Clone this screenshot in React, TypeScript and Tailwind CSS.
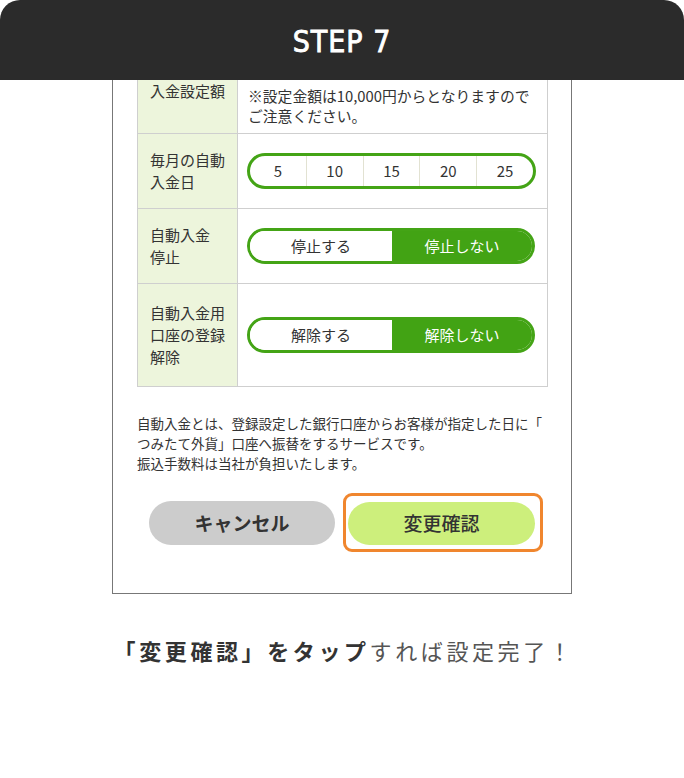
import React from "react";

const jp = { fontFamily: '"Noto Sans CJK JP", "Noto Sans", sans-serif' };

function Row({
  label,
  className,
  labelClass,
  children,
}: {
  label: React.ReactNode;
  className: string;
  labelClass?: string;
  children: React.ReactNode;
}) {
  return (
    <div className={`grid grid-cols-[100px_1fr] border-b border-[#cfcfcf] ${className}`}>
      <div
        className={`bg-[#edf5dc] border-r border-[#cfcfcf] pl-[12px] text-[15px] leading-[22px] text-[#333] flex ${
          labelClass ?? "items-center"
        }`}
      >
        <div>{label}</div>
      </div>
      {children}
    </div>
  );
}

function Toggle({ on, off }: { on: string; off: string }) {
  return (
    <div className="flex h-[36px] w-[288px] rounded-full border-[3px] border-[#44a416] overflow-hidden text-[15px]">
      <div className="flex-1 bg-white flex items-center justify-center text-[#333]">{on}</div>
      <div className="w-[140px] bg-[#42a314] flex items-center justify-center text-white">{off}</div>
    </div>
  );
}

export default function App() {
  const days = [5, 10, 15, 20, 25];
  return (
    <div className="w-[684px] h-[778px] bg-white overflow-hidden" style={jp}>
      <div className="h-[80px] bg-[#2b2b2b] rounded-t-[20px] flex items-center justify-center">
        <span
          className="text-white text-[30px] tracking-[1px] pt-[2px] [-webkit-text-stroke:0.8px_white]"
          style={{ fontFamily: '"DejaVu Sans Condensed", "DejaVu Sans", sans-serif', fontWeight: 400 }}
        >
          STEP 7
        </span>
      </div>

      <div className="ml-[112px] w-[460px] h-[514px] border-x border-b border-[#777] pl-[24px] flex flex-col">
        <div className="w-[411px] border-x border-[#cfcfcf]">
          <Row label="入金設定額" className="h-[54px]" labelClass="items-start leading-[20px]">
            <div className="pl-[10px] pt-[6px] text-[14.8px] leading-[20px] text-[#333] whitespace-nowrap">
              ※設定金額は10,000円からとなりますので
              <br />
              ご注意ください。
            </div>
          </Row>

          <Row
            label={
              <>
                毎月の自動
                <br />
                入金日
              </>
            }
            className="h-[75px]"
          >
            <div className="flex items-center pl-[9px]">
              <div className="flex h-[36px] w-[289px] rounded-full border-[3px] border-[#44a416] overflow-hidden">
                {days.map((d, i) => (
                  <div
                    key={d}
                    className={`flex-1 flex items-center justify-center text-[15px] text-[#333] ${
                      i > 0 ? "border-l border-[#e2e2d2]" : ""
                    }`}
                  >
                    {d}
                  </div>
                ))}
              </div>
            </div>
          </Row>

          <Row
            label={
              <>
                自動入金
                <br />
                停止
              </>
            }
            className="h-[75px]"
          >
            <div className="flex items-center pl-[9px]">
              <Toggle on="停止する" off="停止しない" />
            </div>
          </Row>

          <Row
            label={
              <>
                自動入金用
                <br />
                口座の登録
                <br />
                解除
              </>
            }
            className="h-[103px]"
          >
            <div className="flex items-center pl-[9px]">
              <Toggle on="解除する" off="解除しない" />
            </div>
          </Row>
        </div>

        <p className="mt-[26px] text-[13.5px] leading-[20px] text-[#333] whitespace-nowrap">
          自動入金とは、登録設定した銀行口座からお客様が指定した日に「
          <br />
          つみたて外貨」口座へ振替をするサービスです。
          <br />
          振込手数料は当社が負担いたします。
        </p>

        <div className="mt-[20px] flex items-start pl-[12px] gap-[8px]">
          <button className="mt-[8px] w-[186px] h-[44px] rounded-full bg-[#cccccc] text-[19px] font-bold text-[#333]">
            キャンセル
          </button>
          <div className="w-[200px] h-[59px] rounded-[9px] border-[3px] border-[#f0862e] pt-[6px] pl-[2px] pr-[5px]">
            <button className="w-full h-[43px] rounded-full bg-[#cdef7c] text-[19px] font-medium text-[#333]">
              変更確認
            </button>
          </div>
        </div>
      </div>

      <p className="mt-[40px] pl-[4px] text-center text-[22px] leading-[32px] tracking-[3.6px] text-[#555]">
        <span className="font-bold text-[#333]">「変更確認」をタップ</span>すれば設定完了！
      </p>
    </div>
  );
}
